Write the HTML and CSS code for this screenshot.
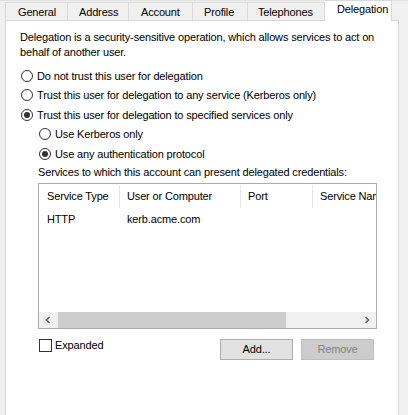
FILE: index.html
```html
<!DOCTYPE html>
<html>
<head>
  <meta charset="UTF-8">
  <title>Delegation</title>
  <link rel="stylesheet" href="styles.css">
</head>
<body>
  <div class="tabs">
    <div class="tab tab-general">General</div>
    <div class="tab tab-address">Address</div>
    <div class="tab tab-account">Account</div>
    <div class="tab tab-profile">Profile</div>
    <div class="tab tab-phones">Telephones</div>
    <div class="tab tab-delegation active">Delegation</div>
  </div>

  <div class="panel">
    <p class="intro">Delegation is a security-sensitive operation, which allows services to act on behalf of another user.</p>

    <div class="radio"><span class="circle"></span>Do not trust this user for delegation</div>
    <div class="radio"><span class="circle"></span>Trust this user for delegation to any service (Kerberos only)</div>
    <div class="radio"><span class="circle checked"></span>Trust this user for delegation to specified services only</div>
    <div class="sub-options">
      <div class="radio"><span class="circle"></span>Use Kerberos only</div>
      <div class="radio"><span class="circle checked"></span>Use any authentication protocol</div>
    </div>

    <div class="services-label">Services to which this account can present delegated credentials:</div>

    <div class="listview">
      <div class="lv-head">
        <div class="col">Service Type</div>
        <div class="col">User or Computer</div>
        <div class="col">Port</div>
        <div class="col last">Service Name</div>
      </div>
      <div class="lv-row">
        <div class="col">HTTP</div>
        <div class="col">kerb.acme.com</div>
        <div class="col"></div>
        <div class="col"></div>
      </div>
      <div class="lv-fill"></div>
      <div class="hscroll">
        <div class="arrow">
          <svg width="8" height="8" viewBox="0 0 8 8"><path d="M5.5 1 L2.5 4 L5.5 7" fill="none" stroke="#606060" stroke-width="1.6"/></svg>
        </div>
        <div class="track"><div class="thumb"></div></div>
        <div class="arrow">
          <svg width="8" height="8" viewBox="0 0 8 8"><path d="M2.5 1 L5.5 4 L2.5 7" fill="none" stroke="#606060" stroke-width="1.6"/></svg>
        </div>
      </div>
    </div>

    <div class="actions">
      <label class="checkbox"><span class="box"></span>Expanded</label>
      <button class="btn">Add...</button>
      <button class="btn disabled">Remove</button>
    </div>
  </div>
</body>
</html>
```

FILE: styles.css
```css
:root {
  --bg: #f0f0f0;
  --panel: #ffffff;
  --tab-border: #d9d9d9;
  --text: #000000;
  --control: #333333;
}

html, body {
  height: 100%;
}

body {
  margin: 0;
  background-color: var(--bg);
  font-family: "Liberation Sans", Arial, sans-serif;
  font-size: 11px;
  letter-spacing: -0.15px;
  color: var(--text);
  display: flex;
  flex-direction: column;
}

.tabs {
  display: flex;
  align-items: flex-end;
  height: 20px;
  padding-left: 5px;
  border-top: 1px solid #e3e3e3;
  box-sizing: border-box;
}

.tab {
  height: 18px;
  box-sizing: border-box;
  border: 1px solid var(--tab-border);
  border-bottom: none;
  border-left: none;
  background-color: var(--bg);
  padding: 1px 0 0 12px;
  line-height: 17px;
  white-space: nowrap;
}

.tab-general { width: 63px; border-left: 1px solid var(--tab-border); }
.tab-address { width: 61px; padding-left: 11px; }
.tab-account { width: 64px; padding-left: 12px; }
.tab-profile { width: 55px; padding-left: 11px; }
.tab-phones { width: 77px; padding-left: 10px; }

.tab.active {
  width: 67px;
  height: 21px;
  margin-top: -1px;
  margin-bottom: -1px;
  background-color: var(--panel);
  padding: 0 0 0 12px;
  line-height: 17px;
  position: relative;
  z-index: 1;
}

.panel {
  flex: 1;
  width: 394px;
  margin-left: 5px;
  box-sizing: border-box;
  background-color: var(--panel);
  border: 1px solid var(--tab-border);
  border-bottom: none;
  padding: 9px 0 0 14px;
}

.intro {
  margin: 0 0 6px 0;
  width: 362px;
  line-height: 15px;
}

.radio {
  height: 19.5px;
  display: flex;
  align-items: center;
  padding-left: 1px;
}

.circle {
  width: 12px;
  height: 12px;
  box-sizing: border-box;
  border: 1px solid var(--control);
  border-radius: 50%;
  margin-right: 4px;
  display: flex;
  align-items: center;
  justify-content: center;
  flex-shrink: 0;
}

.circle.checked::after {
  content: "";
  width: 6px;
  height: 6px;
  border-radius: 50%;
  background-color: var(--control);
}

.sub-options {
  padding-left: 18px;
}

.services-label {
  margin: 1px 0 3px 18px;
  line-height: 15px;
}

.listview {
  margin-left: 18px;
  width: 339px;
  height: 146px;
  box-sizing: border-box;
  border: 1px solid #acacac;
  display: flex;
  flex-direction: column;
  overflow: hidden;
}

.lv-head,
.lv-row {
  display: grid;
  grid-template-columns: 81px 121px 72px 1fr;
}

.lv-head {
  height: 26px;
  align-items: center;
}

.lv-head .col {
  border-right: 1px solid #e5e5e5;
  height: 23px;
  line-height: 23px;
  padding-left: 7px;
  white-space: nowrap;
  overflow: hidden;
}

.lv-head .col:first-child,
.lv-row .col:first-child {
  padding-left: 8px;
}

.lv-head .col.last {
  border-right: none;
}

.lv-row {
  height: 19px;
  line-height: 19px;
}

.lv-row .col {
  padding-left: 7px;
  white-space: nowrap;
}

.lv-fill {
  flex: 1;
}

.hscroll {
  height: 16px;
  display: flex;
  background-color: var(--bg);
}

.arrow {
  width: 18px;
  display: flex;
  align-items: center;
  justify-content: center;
}

.track {
  flex: 1;
  padding-left: 1px;
}

.thumb {
  width: 228px;
  height: 100%;
  background-color: #cdcdcd;
}

.actions {
  display: flex;
  align-items: flex-start;
  margin: 10px 0 0 19px;
}

.checkbox {
  display: flex;
  align-items: center;
  height: 13px;
  width: 181px;
  margin-top: 0;
}

.box {
  width: 13px;
  height: 13px;
  box-sizing: border-box;
  border: 1px solid var(--control);
  margin-right: 3px;
}

.btn {
  width: 73px;
  height: 21px;
  font-family: inherit;
  font-size: 11px;
  letter-spacing: -0.15px;
  color: var(--text);
  background-color: #e1e1e1;
  border: 1px solid #adadad;
  padding: 0;
  margin-right: 8px;
}

.btn.disabled {
  background-color: #cccccc;
  border-color: #bfbfbf;
  color: #838383;
}
```
